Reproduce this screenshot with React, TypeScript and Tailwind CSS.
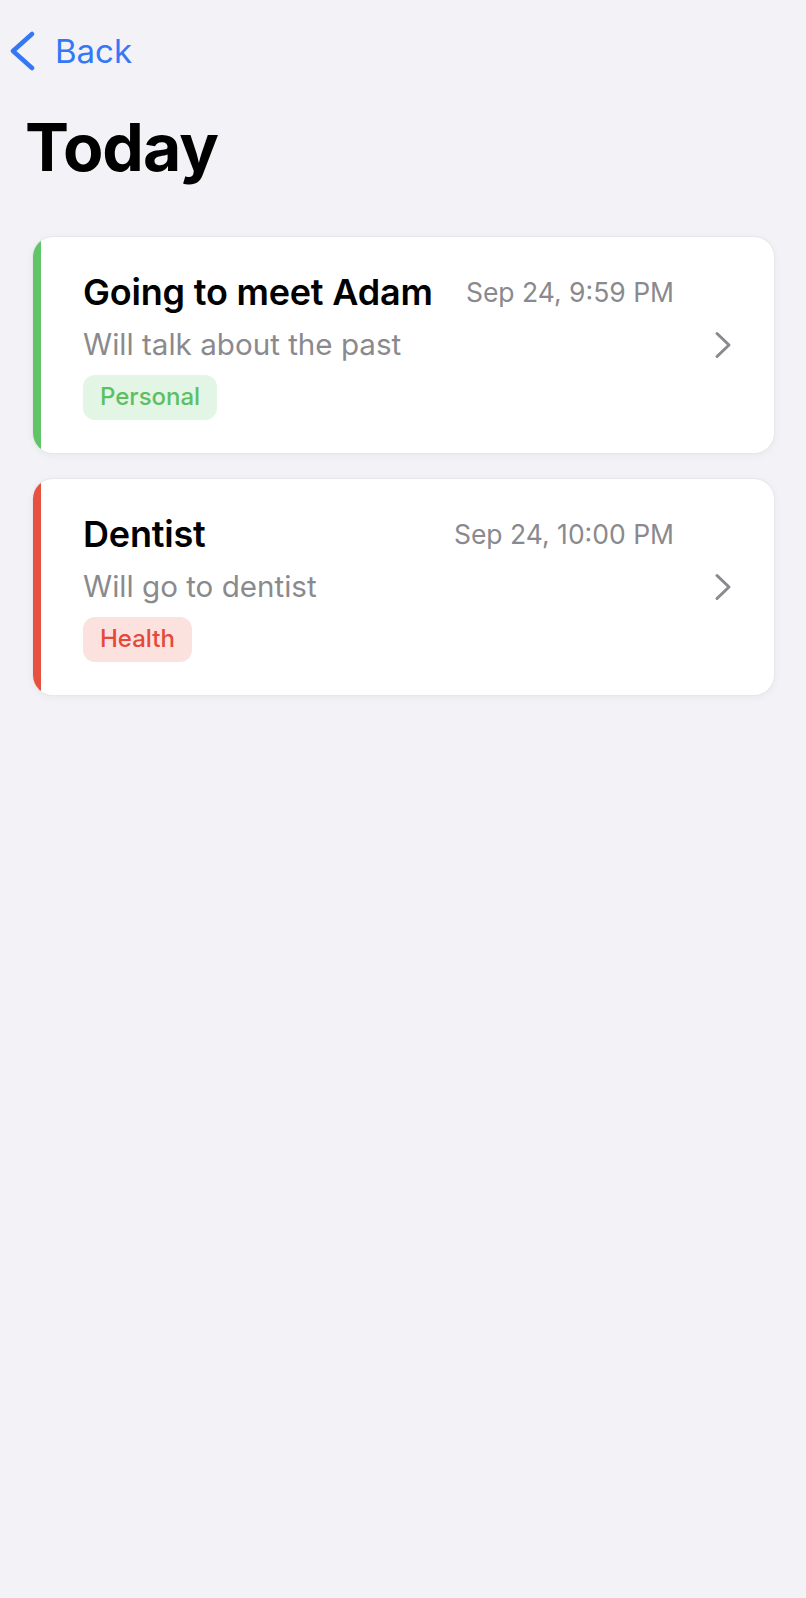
import React from "react";

type Item = {
  title: string;
  date: string;
  note: string;
  tag: string;
  bar: string;
  tagBg: string;
  tagText: string;
};

const items: Item[] = [
  {
    title: "Going to meet Adam",
    date: "Sep 24, 9:59 PM",
    note: "Will talk about the past",
    tag: "Personal",
    bar: "bg-[#61c466]",
    tagBg: "bg-[#e3f5e5]",
    tagText: "text-[#5cc062]",
  },
  {
    title: "Dentist",
    date: "Sep 24, 10:00 PM",
    note: "Will go to dentist",
    tag: "Health",
    bar: "bg-[#e8503f]",
    tagBg: "bg-[#fbe2df]",
    tagText: "text-[#e5493a]",
  },
];

function Card({ item }: { item: Item }) {
  return (
    <div className="flex h-[216px] overflow-hidden rounded-[20px] bg-white shadow-[0_2px_10px_rgba(0,0,0,0.05)] ring-1 ring-[#e6e6eb]">
      <div className={`w-[8px] shrink-0 ${item.bar}`} />
      <div className="flex flex-1 items-center pl-[42px] pr-[42px]">
        <div className="flex min-w-0 flex-1 flex-col">
          <div className="flex items-center justify-between">
            <span className="text-[36px] leading-[42px] font-semibold text-black tracking-[-0.2px]">
              {item.title}
            </span>
            <span className="text-[26.5px] leading-[30px] text-[#8a8a8e]">
              {item.date}
            </span>
          </div>
          <div className="mt-[14px] text-[29.6px] leading-[35px] text-[#8a8a8e]">
            {item.note}
          </div>
          <div className="mt-[13px] flex">
            <span
              className={`flex h-[45px] items-center rounded-[12px] px-[17px] text-[24px] font-medium ${item.tagBg} ${item.tagText}`}
            >
              {item.tag}
            </span>
          </div>
        </div>
        <svg
          className="ml-[40px] shrink-0"
          width="18"
          height="28"
          viewBox="0 0 18 28"
          fill="none"
        >
          <polyline
            points="3,2.5 15,14 3,25.5"
            stroke="#8a8a8e"
            strokeWidth="3"
            strokeLinecap="round"
            strokeLinejoin="round"
          />
        </svg>
      </div>
    </div>
  );
}

export default function App() {
  return (
    <div className="min-h-[1598px] w-full bg-[#f2f2f7] pt-[31px] font-['Inter',sans-serif]">
      <div className="flex h-[40px] items-center pl-[10px]">
        <svg width="26" height="40" viewBox="0 0 26 40" fill="none">
          <polyline
            points="22,3 3,20 22,37"
            stroke="#3478f6"
            strokeWidth="4.5"
            strokeLinecap="round"
            strokeLinejoin="round"
          />
        </svg>
        <span className="ml-[19px] text-[33px] leading-[40px] text-[#3478f6]">Back</span>
      </div>
      <h1 className="mt-[36px] pl-[25px] text-[66px] leading-[80px] font-bold tracking-[-1px] text-black">
        Today
      </h1>
      <div className="mt-[50px] flex flex-col gap-[26px] pl-[33px] pr-[32px]">
        {items.map((it) => (
          <Card key={it.title} item={it} />
        ))}
      </div>
    </div>
  );
}
